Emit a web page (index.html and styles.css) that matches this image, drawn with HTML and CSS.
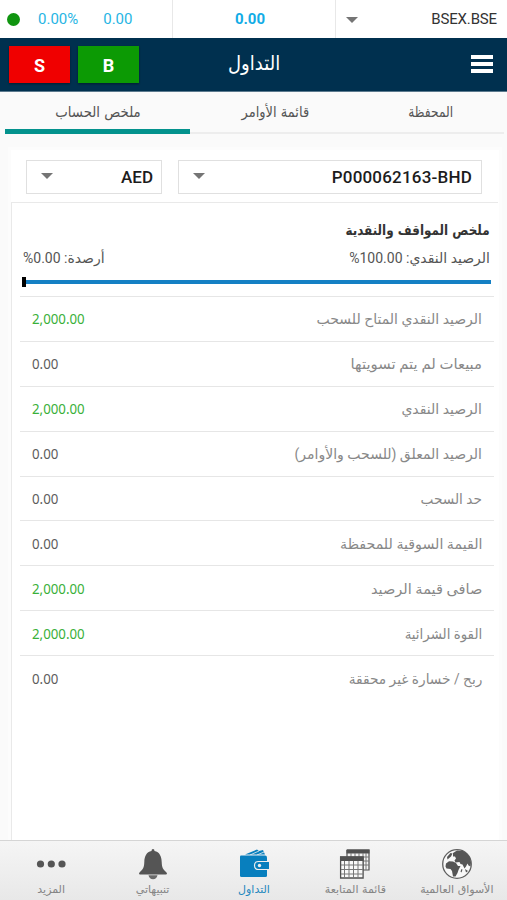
FILE: index.html
```html
<!DOCTYPE html>
<html lang="ar" dir="rtl">
<head>
<meta charset="utf-8">
<title>التداول</title>
<link rel="stylesheet" href="styles.css">
</head>
<body>
<div class="app">
  <section class="ticker" dir="ltr">
    <div class="change"><i class="dot"></i><span class="pct">0.00%</span><span class="diff">0.00</span></div>
    <div class="price">0.00</div>
    <div class="symbol"><i class="caret"></i><span>BSEX.BSE</span></div>
  </section>
  <header class="header" dir="ltr">
    <button class="trade sell">S</button>
    <button class="trade buy">B</button>
    <h1><span class="fit title">التداول</span></h1>
    <div class="menu"><i></i><i></i><i></i></div>
  </header>
  <nav class="tabs">
    <a class="tab"><span class="fit t1">المحفظة</span></a>
    <a class="tab"><span class="fit t2">قائمة الأوامر</span></a>
    <a class="tab active"><span class="fit t3">ملخص الحساب</span></a>
  </nav>
  <main class="content">
    <div class="filters" dir="ltr">
      <div class="select currency"><i class="caret"></i><span>AED</span></div>
      <div class="select account"><i class="caret"></i><span>P000062163-BHD</span></div>
    </div>
    <section class="summary">
      <h2><span class="fit s1">ملخص المواقف والنقدية</span></h2>
      <div class="ratio"><span>الرصيد النقدي: 100.00%</span><span>أرصدة: 0.00%</span></div>
      <div class="bar"><i></i></div>
      <ul class="rows">
        <li><span class="fit r1">الرصيد النقدي المتاح للسحب</span><b class="up">2,000.00</b></li>
        <li><span class="fit r2">مبيعات لم يتم تسويتها</span><b>0.00</b></li>
        <li><span class="fit r3">الرصيد النقدي</span><b class="up">2,000.00</b></li>
        <li><span class="fit r4">الرصيد المعلق (للسحب والأوامر)</span><b>0.00</b></li>
        <li><span class="fit r5">حد السحب</span><b>0.00</b></li>
        <li><span class="fit r6">القيمة السوقية للمحفظة</span><b>0.00</b></li>
        <li><span class="fit r7">صافى قيمة الرصيد</span><b class="up">2,000.00</b></li>
        <li><span class="fit r8">القوة الشرائية</span><b class="up">2,000.00</b></li>
        <li><span class="fit r9">ربح / خسارة غير محققة</span><b>0.00</b></li>
      </ul>
    </section>
  </main>
  <footer class="bottom">
    <a>
      <svg viewBox="0 0 32 32"><circle cx="16" cy="16" r="14.300" fill="#f8f8f8" stroke="#606060" stroke-width="1.300"/><path fill="#555" d="M12 5l4-2.500 6 .5 4 2.500 3 4 1 5-.5 4-2-1-1-2-1.500 3-1.500 2-2-4-2-.5-1-2-4 .5-1-2 1.500-2-1-2-2 0zM5 15.500l3-2.200 4 .2 3 1.500 2 3 2.500 0-2 4-1 3-2 3.500-2.500 0-1-5.500-1.500-2-4-.5-1-2zM6 9l3.500-4 2 .5-1.500 3-3.500 3z"/><path fill="#555" d="M20.500 21l1 .5-1 3-1-1zM24 21l3 2-2 1.500z"/></svg>
      <span>الأسواق العالمية</span></a>
    <a>
      <svg viewBox="0 0 32 32"><path fill="#f5f5f5" stroke="#505050" stroke-width="1.200" d="M8 2h22v20h-6M8 2v7"/><path fill="#505050" d="M7.500 1.500h23v4h-23z"/><path fill="none" stroke="#777" d="M12 5v4M16 5v4M20 5v4M24 5v17M27 5v17M24 9h6M24 13h6M24 17h6"/><path fill="#f8f8f8" stroke="#505050" stroke-width="1.300" d="M1.600 9h22.500v21H1.600z"/><path fill="#505050" d="M1 8.500h23.500v4.500H1z"/><path fill="none" stroke="#777" d="M5.500 13v17M10 13v17M14.500 13v17M19 13v17M2 17h22M2 21.500h22M2 26h22"/></svg>
      <span>قائمة المتابعة</span></a>
    <a class="active">
      <svg viewBox="0 0 32 32"><path fill="#087fbe" d="M7 6.500L19 1.500l2 1.500 4-1 2 4.500z"/><path stroke="#efefef" stroke-width=".8" d="M12 7l9-4M19 7l7-3"/><path fill="#087fbe" d="M2 8.500q0-1 1-1h24q2 0 2 2v18q0 1.500-1.500 1.500h-24q-1.500 0-1.500-1.500z"/><path fill="#087fbe" stroke="#efefef" stroke-width="1.200" d="M32 13.500H20.500q-4 0-4 4t4 4H32"/><path fill="#efefef" d="M31 12h2v11h-2z"/><circle cx="21.500" cy="17.500" r="1.700" fill="#efefef"/></svg>
      <span>التداول</span></a>
    <a>
      <svg viewBox="0 0 32 32"><path fill="#555" d="M14.500 3q0-2 1.500-2t1.500 2c5 1 7 5 7.200 11 .2 6 1.300 7 4.800 10.500.8 1 .5 2-.5 2H3c-1 0-1.300-1-.5-2C6 21 7.100 20 7.300 14 7.500 8 9.500 4 14.500 3z"/><path fill="#6a6a6a" d="M11.500 27.200h9q-1 4-4.500 4t-4.500-4z"/></svg>
      <span>تنبيهاتي</span></a>
    <a>
      <svg viewBox="0 0 32 32"><g fill="#555"><circle cx="5.500" cy="16" r="3.600"/><circle cx="16.300" cy="16" r="3.600"/><circle cx="27" cy="16" r="3.600"/></g></svg>
      <span>المزيد</span></a>
  </footer>
</div>
</body>
</html>
```
FILE: styles.css
```css
* { box-sizing: border-box; }
body { margin: 0; background: #fafafa; font-family: Roboto, "DejaVu Sans", sans-serif; }
.app { width: 507px; height: 900px; display: flex; flex-direction: column; overflow: hidden; }
i { display: block; }
.fit { display: inline-block; white-space: nowrap; transform-origin: right center; }

.ticker { height: 38px; flex: none; display: flex; background: #fff; color: #27b5e4; font-size: 15px; line-height: 39px; }
.ticker > div { display: flex; align-items: center; padding-top: 1px; }
.ticker .change { width: 173px; padding-left: 7px; border-right: 1px solid #e8e8e8; }
.dot { width: 13px; height: 13px; border-radius: 50%; background: #109510; }
.pct { margin-left: 18px; }
.diff { margin-left: 25px; }
.ticker .price { width: 163px; padding-right: 8px; justify-content: center; font-weight: 700; color: #12ace6; border-right: 1px solid #e8e8e8; }
.ticker .symbol { flex: 1; padding: 1px 10px 0; justify-content: space-between; color: #333; }
.symbol span { letter-spacing: -.15px; }
.caret { border: 6px solid transparent; border-top-color: #757575; border-bottom: 0; }

.header { height: 54px; flex: none; display: flex; align-items: center; padding: 0 14px 1px 9px; background: #00304f; border-bottom: 1px solid #5c7a8e; }
.trade { width: 61px; height: 37px; margin-right: 8px; padding: 2px 0 0; border: 0; color: #fff; font: 700 18px Roboto, sans-serif; box-shadow: 0 1px 2px #0006; }
.sell { background: #f00000; }
.buy { background: #0c9a04; }
h1 { flex: 1; margin: 0 0 3px 81px; color: #fff; font: 400 18px "DejaVu Sans", sans-serif; }
.title { transform: scaleY(1.12); }
.menu { width: 22px; display: grid; gap: 3px; }
.menu i { height: 4px; background: #fff; }

.tabs { height: 45px; flex: none; display: flex; padding: 0 3px 0 5px; }
.tab { flex: 1; display: flex; justify-content: center; height: 42px; padding-top: 10px; border-bottom: 2px solid #ededed; color: #555; font: 14px/20px "DejaVu Sans", sans-serif; }
.tab .fit { transform-origin: center; height: 20px; }
.t1 { transform: scale(.87, 1.06); }
.t2 { transform: translateX(1px) scale(.93, 1.06); }
.t3 { transform: scale(.95, 1.06); }
.tab.active { flex: 0 0 185px; border-bottom: 5px solid #03928d; }
.tab:nth-child(1) { flex: 0 0 146px; }

.content { flex: 1; margin: 13px 8px 0 11px; background: #fff; display: flex; flex-direction: column; box-shadow: 0 0 0 3px #fcfcfc; }
.filters { height: 52px; display: flex; gap: 16px; padding: 10px 17px 0 15px; }
.select { height: 34px; display: flex; align-items: center; justify-content: space-between; border: 1px solid #e0e0e0; color: #1c1c1c; font-size: 17px; font-weight: 500; }
.select .caret { margin-top: -3px; }
.currency { width: 136px; padding: 0 8px 0 14px; }
.account { flex: 1; padding: 0 9px 0 14px; }
.account span { letter-spacing: .2px; }
.summary { flex: 1; margin-right: 1px; border: solid #e9e9e9; border-width: 1px 0 0 1px; padding: 16px 4px 0 8px; }
h2 { margin: 0 4px; color: #333; font: 700 14px/22px "DejaVu Sans", sans-serif; height: 22px; }
.s1 { transform: scaleX(.855); }
.ratio { display: flex; justify-content: space-between; margin: 5px 4px 0 3px; height: 24px; color: #555; font: 14px/24px Roboto, "DejaVu Sans", sans-serif; }
.bar { height: 4px; margin: 10px 3px 0 2px; background: #1580c4; display: flex; align-items: center; justify-content: flex-end; }
.bar i { width: 4px; height: 10px; flex: none; background: #000; }
.rows { list-style: none; margin: 12px 0 0; padding: 0; }
.rows li { height: 44.900px; display: flex; align-items: center; justify-content: space-between; padding: 1px 12px 0 12px; border-top: 1px solid #e6e6e6; color: #888; font: 14px/24px Roboto, "DejaVu Sans", sans-serif; }
.r2 { transform: scaleX(1.06); }
.r5 { transform: scaleX(.975); }
.r6 { transform: scaleX(1.014); }
.r7 { transform: scaleX(1.038); }
.r8 { transform: scaleX(.955); }
.r9 { transform: scaleX(.98); }
.rows b { color: #5c5c5c; font: 14.500px "Noto Sans", sans-serif; transform: scaleX(.915); transform-origin: left center; margin-top: -2px; }
.rows b.up { color: #39b039; }

.bottom { height: 60px; flex: none; display: flex; background: linear-gradient(#f5f5f5, #e8e8e8); border-top: 1px solid #d5d5d5; }
.bottom a { flex: 1; display: flex; flex-direction: column; align-items: center; padding: 7px 0 0 1px; color: #858585; font: 11px/16px "DejaVu Sans", sans-serif; }
.bottom a.active { color: #2588be; }
.bottom svg { width: 32px; height: 32px; margin-bottom: 2px; }
```
